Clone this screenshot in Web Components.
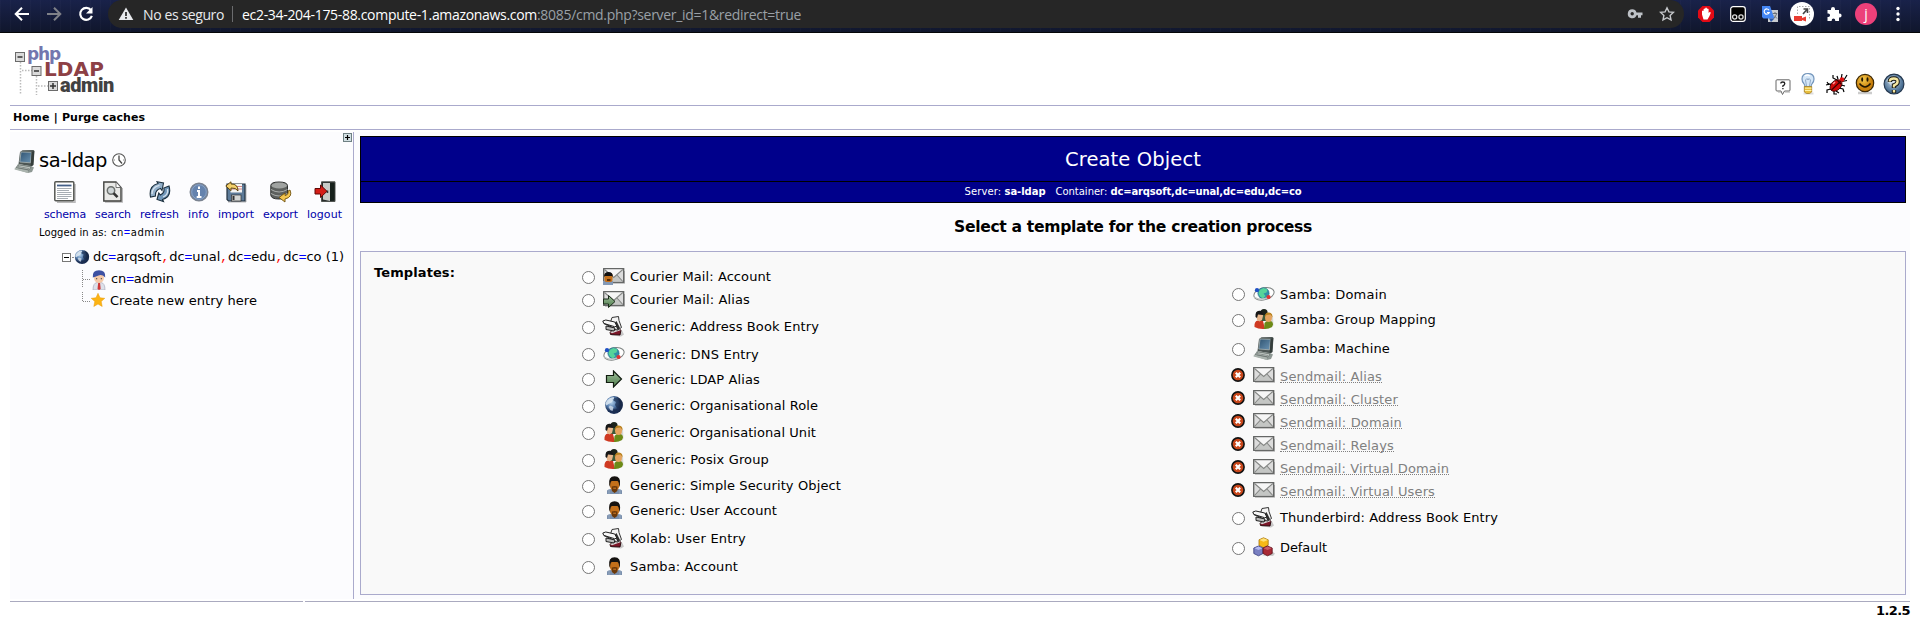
<!DOCTYPE html>
<html lang="es">
<head>
<meta charset="utf-8">
<title>phpLDAPadmin (1.2.5)</title>
<style>
html,body{height:621px}
body{margin:0;background:#fff;font:13px "DejaVu Sans",Verdana,sans-serif;color:#000;overflow:hidden}
</style>
</head>
<body>
<pla-app></pla-app>
<script>
class Base extends HTMLElement {
  connectedCallback() {
    if (this.shadowRoot) return;
    this.attachShadow({ mode: 'open' }).innerHTML = this.render();
  }
}

/* Icon set: [width, height, markup] */
const mail = (x = 0) => `<rect x="${x + .7}" y=".7" width="20" height="13.6" fill="#dcdcdc" stroke="#5f6160" stroke-width="1.3"/><path d="M${x + 1.5} 13.5 L${x + 7} 7.2 H${x + 14} L${x + 19.6} 13.5Z" fill="#c4c6c4"/><path d="M${x + 1.5} 1.5 L${x + 10.7} 9.5 L${x + 19.8} 1.5Z" fill="#f6f6f6"/><path d="M${x + 1.5} 1.5 L${x + 10.7} 9.5 L${x + 19.8} 1.5 M${x + 1.5} 13.5 L${x + 7.5} 7 M${x + 19.8} 13.5 L${x + 14} 7" stroke="#858785" fill="none" stroke-width="1.1"/><path d="M${x + 2} 15.5H${x + 21.5}V3" stroke="#0003" fill="none"/>`;
const man = `<path d="M1 18v-3.500q1-1.500 4-1.500h7q3 0 4 1.500V18z" fill="#7b90ad"/><path d="M3 14v4M14 14v4" stroke="#96a9c2"/><ellipse cx="8.600" cy="8" rx="5" ry="7" fill="#c4701a"/><path d="M3.300 9Q2 .3 8.600.3 15.200.3 13.900 9l-.8 2q.2-5-1.600-6H5.700Q4 6 4.100 11z" fill="#151210"/><path d="M5.700 10.500q3-1 5.800 0l-.2 4.500-2.700 2-2.700-2z" fill="#6b390a"/><path d="M7.200 11.700h2.800v1H7.200z" fill="#d57d26"/>`;
const globe = `<circle cx="10" cy="10" r="8.900" fill="url(#gl)"/><path d="M3.500 5q2-2.500 6-3l1 1.500-2 1 .5 1.500-2.500 2L4.500 9 2.500 10.500 1.500 9Q2 6.500 3.500 5z" fill="#dfeaf3" opacity=".85"/><path d="M6 10.500l3.500 1.500-1 4q-3-1-4-4z" fill="#dbe6f1" opacity=".75"/><path d="M10 3q5-.5 7 4l-1 5-3 1-2-3 1-3-2.500-1.500zM9.500 14l4 1-2 3-2.500-.5z" fill="#1b2e4f" opacity=".7"/><path d="M13 1.700q6 3 5.900 8.300-.5 5-5.900 8.300 6-8.300 0-16.600z" fill="#15233e" opacity=".5"/>`;
const defs = `<defs><radialGradient id="gl" cx=".35" cy=".35"><stop offset="0" stop-color="#b7d5ee"/><stop offset=".6" stop-color="#537aab"/><stop offset="1" stop-color="#1b2f55"/></radialGradient><linearGradient id="scr" x2="1" y2="1"><stop offset="0" stop-color="#2f5371"/><stop offset="1" stop-color="#6a93b3"/></linearGradient><linearGradient id="gr" x2="0" y2="1"><stop offset="0" stop-color="#9fc09c"/><stop offset="1" stop-color="#4e7c4b"/></linearGradient><radialGradient id="sm" cx=".4" cy=".3"><stop offset="0" stop-color="#f6cb4c"/><stop offset="1" stop-color="#c9800c"/></radialGradient><radialGradient id="hp" cx=".45" cy=".4"><stop offset="0" stop-color="#c3d6e6"/><stop offset="1" stop-color="#4a6f93"/></radialGradient></defs>`;
const ICONS = {
  back: [16, 16, `<path d="M15 8H2M8 1.700L1.700 8 8 14.300" stroke="#fff" stroke-width="2" fill="none"/>`],
  fwd: [16, 16, `<path d="M1 8H14M8 1.700L14.300 8 8 14.300" stroke="#7f8188" stroke-width="2" fill="none"/>`],
  reload: [16, 16, `<path d="M13 4.200A6 6 0 1 0 13.900 9.800" stroke="#fff" stroke-width="2.100" fill="none"/><path d="M14.500 1v6.500H8z" fill="#fff"/>`],
  warn: [16, 14, `<path d="M8 .5L15.300 13H.7z" fill="#e8eaed"/><path d="M8 5v4M8 10v1.700" stroke="#262626" stroke-width="1.700"/>`],
  key: [16, 12, `<path d="M5.300 1.300a4.500 4.500 0 1 0 4.200 6H11v2.500h3V7.300h1.500v-2.800H9.500a4.500 4.500 0 0 0-4.200-3.200z" fill="#bdc1c6"/><circle cx="5.200" cy="5.800" r="1.700" fill="#262626"/>`],
  star: [16, 16, `<path d="M8 1.800l1.900 4.100 4.500.5-3.300 3.100.9 4.400L8 11.700l-4 2.200.9-4.400L1.600 6.400l4.500-.5z" fill="none" stroke="#c6c8cb" stroke-width="1.400"/>`],
  abp: [18, 18, `<path d="M5.500 1h7L17 5.500v7L12.500 17h-7L1 12.500v-7z" fill="#e20a15"/><path d="M5 9.500V6q1-1 1.600 0V4q.9-1 1.600 0V3q.9-1 1.700 0v1q1-1 1.700.2V8q1.400-1.700 2.200-.3L12.500 11l-2 3.500h-4z" fill="#fff"/>`],
  monkey: [18, 18, `<rect x="1.700" y="1.700" width="14.600" height="14.600" rx="2.500" fill="#000" stroke="#fff" stroke-width="1.200"/><circle cx="5.700" cy="12" r="2.100" fill="none" stroke="#ddd" stroke-width="1.300"/><circle cx="12" cy="12" r="2.100" fill="none" stroke="#ddd" stroke-width="1.300"/>`],
  trans: [18, 18, `<rect x="7" y="5" width="10" height="12" fill="#c9ccd0"/><path d="M1 1h8l4.500 12.500H2.500L1 12z" fill="#4486f4"/><path d="M8 13.500h5.500L10 17z" fill="#2b57a8"/><path d="M8 5.200A2.600 2.600 0 1 0 8.200 7.500H6" stroke="#fff" stroke-width="1.200" fill="none"/><path d="M11.700 8.500h4.500M14 7v1.500M15.500 9q-1 3-3 4.500M13 10.500l3 3" stroke="#6b7178" fill="none"/>`],
  rec: [24, 24, `<circle cx="12" cy="12" r="12" fill="#fff"/><path d="M7.500 12V4.500H19.500V17" stroke="#aaa" stroke-dasharray="1.500 1.500" fill="none"/><path d="M13 12l4-4.500M13.500 7h4v4" stroke="#444" stroke-width="1.600" fill="none"/><path d="M4 14h8v2l4-1.500v5L12 18v1H4z" fill="#e93c31"/>`],
  puzzle: [16, 16, `<path d="M1.500 4H5V3a2 2 0 0 1 4 0v1h4v3.500h.6a2 2 0 0 1 0 4H13V15H9.200v-.8a1.700 1.700 0 0 0-3.500 0v.8H1.500v-4h.8a1.700 1.700 0 0 0 0-3.500h-.8z" fill="#fff"/>`],
  dots: [6, 16, `<circle cx="3" cy="2.500" r="1.700" fill="#fff"/><circle cx="3" cy="8" r="1.700" fill="#fff"/><circle cx="3" cy="13.500" r="1.700" fill="#fff"/>`],
  bubble: [16, 17, `<path d="M2 .8h12q1 0 1 1V11q0 1-1 1H9.500L7.500 15.500 6 12H2q-1 0-1-1V1.800q0-1 1-1z" fill="#fff" stroke="#666"/><path d="M3 13h3M10 13h5" stroke="#aaa"/><path d="M5.800 4.500q0-1.500 2-1.500t2 1.500-1.900 2.300v1.300M7.900 9v1.300" stroke="#222" stroke-width="1.300" fill="none"/>`],
  bulb: [16, 22, `<path d="M3.500 20.500h10" stroke="#0002" stroke-width="2"/><path d="M8 .7Q14 .7 14 6q0 2.500-1.800 4.500Q11 12 11 14H5q0-2-1.200-3.500Q2 8.500 2 6 2 .7 8 .7z" fill="#d5e7f8" stroke="#7395bb" stroke-width="1.200"/><path d="M6.500 13l-1-6 1.500-1.500L8 7l1-1.500L10.500 7l-1 6" stroke="#7d99ba" fill="none" stroke-width=".8"/><path d="M4.700 3q3-2 5 0" stroke="#fff" stroke-width="1.500" fill="none"/><path d="M4.300 13.500h7.400v5.500L9.500 20.500h-3L4.300 19z" fill="#e8bd3d" stroke="#9b7518" stroke-width=".7"/><path d="M5 15.200h6.500M5 17.500h6.500" stroke="#fff3a5"/>`],
  bug: [23, 22, `<path d="M16 7l1-6M19 7l3-5M17 8.500l5-1M4 12L2 9M1 12l4-1 2 2M6 16l-4 1v3M9 18v3h3M11 18l3 2M14 15l4 1 1 3M16 12l4 1M12 7L8 5V2M13 6l-1-3" stroke="#000" stroke-width="1.200" fill="none"/><ellipse cx="11" cy="12.500" rx="6.800" ry="4.800" transform="rotate(-42 11 12.500)" fill="#d10909" stroke="#2a0000" stroke-width=".8"/><circle cx="17" cy="6.500" r="2.300" fill="#e01010"/><path d="M16 8L6.500 17M12 7l4 4" stroke="#400" stroke-width="1.200"/><path d="M8 11l2-2" stroke="#ff9b9b" stroke-width="1.500"/>`],
  smile: [20, 22, `<path d="M3 20h14" stroke="#0003" stroke-width="2.500"/><circle cx="10" cy="10" r="8.700" fill="url(#sm)" stroke="#3b2806" stroke-width="1.200"/><ellipse cx="7.200" cy="6.500" rx="1" ry="2.200" fill="#201500"/><ellipse cx="12.500" cy="6.500" rx="1" ry="2.200" fill="#201500"/><path d="M4.500 10.500q5.500 7 11 0" stroke="#201500" stroke-width="1.300" fill="none"/>`],
  help: [22, 22, `<circle cx="11" cy="11" r="9.900" fill="url(#hp)" stroke="#25384f" stroke-width="1.200"/><path d="M3 8q5-8 15-2-6 1-8 8z" fill="#fff" opacity=".45"/><path d="M6.800 9q0-3.500 4-3.500t3.800 3.300q0 2.500-3.600 3.500v2.700M11 17v3" stroke="#161611" stroke-width="4.400" fill="none"/><path d="M6.800 8.600q0-3.100 4-3.100t3.800 3.100q0 2.700-3.600 3.700v2.300M11 17v2.600" stroke="#f6e8a2" stroke-width="2.400" fill="none"/>`],
  expand: [9, 9, `<rect x=".5" y=".5" width="8" height="8" fill="#d3e0e3" stroke="#6f8083"/><path d="M4.500 2v5M2 4.500h5" stroke="#000" stroke-width="1.200"/>`],
  machine: [22, 25, `<path d="M6 3L8.500 1.200 19.500 1l1 1-1 14-2 1.500L4.500 15z" fill="#4d5654"/><path d="M7 3l10.500.3-1 10.500L5.800 13z" fill="url(#scr)" stroke="#a9b5b5" stroke-width=".8"/><path d="M17.500 3l2.700-1-1 14-2.500 1.200z" fill="#343d3b"/><path d="M4 15l13 2 3 1.500L18 23l-4 1L1 20z" fill="#8e9894"/><path d="M5 16l12 2-2 3L2 18.500z" fill="#c9d0cc" stroke="#5b6461" stroke-width=".6"/><path d="M1 18.500l13 3V24L.5 20.500z" fill="#aab3ae"/><path d="M4 17.500l11 2M3.500 18.800l11 2" stroke="#6a7370" stroke-width=".7"/>`],
  clock: [14, 14, `<circle cx="7" cy="7" r="6.300" fill="#fff" stroke="#555" stroke-width="1.100"/><path d="M7 2.500V7l3 3.500" stroke="#444" stroke-width="1.300" fill="none"/><path d="M2 7h1M11 7h1" stroke="#888"/>`],
  schema: [22, 22, `<path d="M3 21.200h18V3" stroke="#0004" stroke-width="1.500" fill="none"/><rect x=".8" y=".8" width="19" height="19" rx="1" fill="#fff" stroke="#555753" stroke-width="1.500"/><path d="M3 4.500h14.500" stroke="#435f88" stroke-width="1.800"/><path d="M3 7.500h14.500M3 9.500h12M3 11.500h14.500M3 13.500h14.500M3 15.500h14.500M3 17.500h11" stroke="#a7adb3" stroke-width="1"/>`],
  search: [20, 22, `<path d="M2 21h17.500V7" stroke="#0004" fill="none" stroke-width="1.500"/><path d="M.8 1H13l5 5.500V20H.8z" fill="#e9e9e7" stroke="#41423f" stroke-width="1.400"/><path d="M13 1v5.500h5z" fill="#fff" stroke="#555" stroke-width=".8"/><circle cx="8" cy="9.500" r="3.700" fill="#cfd5d7" stroke="#6c706d" stroke-width="1.500"/><path d="M10.500 12.200l4 4" stroke="#333" stroke-width="2.600"/>`],
  refresh: [22, 22, `<path d="M1.500 16Q-.5 5 9 2.500L8 .8 14.500 2 13 9.500l-1.500-2Q6 9 6.500 15z" fill="#93b0ca" stroke="#1c303f" stroke-width="1.100"/><path d="M20 5Q23 15.500 13.500 18.500l1 2L8 18.500l1.800-6.500 1.500 2Q16 12 14.800 7z" fill="#7297b9" stroke="#1c303f" stroke-width="1.100"/><path d="M3 13q0-7 7.500-8.700M18.500 8q1 6-4.500 8" stroke="#d6e3ee" fill="none" stroke-width="1.300"/>`],
  info: [20, 20, `<circle cx="10" cy="10" r="8.800" fill="#6583ae" stroke="#7b8390" stroke-width="1.400"/><circle cx="10" cy="10" r="7.300" fill="none" stroke="#93a9c8" stroke-width=".8"/><path d="M10 4.500v2.400M8 9h2v5.500M7.700 15h4.800" stroke="#fff" stroke-width="2" fill="none"/>`],
  import: [22, 22, `<path d="M3 21h18V4" stroke="#0004" fill="none"/><path d="M2 3h18v17H3.500L2 18.500z" fill="#5d7b99" stroke="#22313f" stroke-width="1.200"/><rect x="5.500" y="3" width="11.500" height="8.500" fill="#f5f5f3"/><path d="M6 5.500h11M6 8h11" stroke="#c66" stroke-width=".8"/><rect x="6.500" y="14" width="9.500" height="6" fill="#d4d6d4" stroke="#333" stroke-width=".7"/><path d="M8.500 15v4" stroke="#333" stroke-width="2"/><path d="M.8 5L6 .8V3q7-.3 7 7-2-3.500-7-3v2.700z" fill="#f3d06b" stroke="#604610" stroke-width="1"/>`],
  export: [22, 22, `<path d="M.8 4.500Q1 1 9 1t8.500 3.500V14Q17 18 9 18T.8 14z" fill="#5d605e" stroke="#2d2f2e"/><ellipse cx="9.200" cy="4.500" rx="7.800" ry="3" fill="#a0a3a1"/><path d="M1 8.500q8 5 16.500 0M1 12.500q8 5 16.500 0" stroke="#a9acaa" fill="none" stroke-width="1"/><path d="M20 9q3 7-5 9v3l-6-4.500 6-4.500v2.500q4-1 3-4.500z" fill="#f2c54f" stroke="#70510f" stroke-width=".9"/>`],
  logout: [22, 22, `<path d="M7.500.8H21V20.500H7.500z" fill="#272b2a" stroke="#505450"/><path d="M9 2h7v18L9 18.500z" fill="#c8cbc7"/><path d="M16 2v18l4.500-1V2z" fill="#16201b"/><path d="M13.500 9.500v2.500" stroke="#333" stroke-width="1.500"/><path d="M1 7.500h5.500V4l6.500 6.300-6.500 6.200v-3.500H1z" fill="#d41d17" stroke="#5f0806"/>`],
  minus: [12, 9, `<rect x=".5" y=".5" width="8" height="8" fill="#fff" stroke="#777"/><path d="M2 4.500h5" stroke="#000"/><path d="M10 4.500h2" stroke="#888"/>`],
  branch: [9, 22, `<path d="M.5 2v17" stroke="#888" stroke-dasharray="1 1"/><path d="M1 11.500h8" stroke="#888" stroke-dasharray="1 1"/>`],
  branchend: [9, 22, `<path d="M.5 2v10" stroke="#888" stroke-dasharray="1 1"/><path d="M1 11.500h8" stroke="#888" stroke-dasharray="1 1"/>`],
  globe: [20, 20, globe],
  minglobe: [16, 16, `<g transform="scale(.8)">${globe}</g>`],
  person: [14, 20, `<path d="M1 20q0-7 4-7.500h4q4 .5 4 7.500z" fill="#dde1ea" stroke="#aab" stroke-width=".7"/><path d="M6.200 12.500h1.800L8.700 19 7 20l-1.500-1z" fill="#cf3838"/><ellipse cx="7" cy="7.700" rx="5" ry="5.300" fill="#f5c9a8"/><path d="M.8 7.500Q0 .3 7 .3T13.200 7.500Q10 4 6.500 5.500 3 7 .8 7.500z" fill="#3d51a3"/><path d="M4.700 8v1.300M9.300 8v1.300" stroke="#444"/>`],
  staro: [14, 14, `<path d="M7 .3l2 4.500 4.800.5L10.200 8.500l1 5L7 11l-4.200 2.500 1-5L.2 5.300 5 4.800z" fill="#fcb414" stroke="#e99a0c" stroke-width=".5"/>`],
  mail: [22, 17, mail()],
  mailuser: [22, 17, `${mail()}<rect y="13" width="10" height="4" fill="#8298b5"/><rect x="1.500" y="5" width="8" height="9" rx="2" fill="#c4701a"/><path d="M1 9Q1 4 5.500 4T9.800 9L9 8H2z" fill="#111"/><path d="M4 11h3.500v2H4z" fill="#5b3009"/>`],
  mailarrow: [22, 17, `${mail()}<path d="M.5 8h5V4.500L12 10.500 5.500 16.500V13h-5z" fill="url(#gr)" stroke="#1d2c1c" stroke-width="1"/>`],
  book: [23, 21, `<path d="M9 19.500l10 1 3-2-2-4z" fill="#0003"/><path d="M8 16l9-3 2 1-1 5-9.500-.5z" fill="#7b1628" stroke="#270509" stroke-width=".9"/><path d="M8 16l9-3 2 1-9 3.200z" fill="#d7d7d7"/><path d="M10 1.500l6.500-1 .5 4 2.500 7-4 2.500-9-2z" fill="#f4f4f4" stroke="#333" stroke-width="1"/><path d="M14.500 5l3.500 7-2.500 2-3-7z" fill="#2d2d2d"/><path d="M.8 5l3-1 9 2 2 4-4 1.500-9-4z" fill="#f7f7f7" stroke="#222" stroke-width="1"/><path d="M2 7.500l10 3M4 10l9 2-1 3-8-1.500z" fill="#bbb" stroke="#222" stroke-width="1"/>`],
  dns: [22, 18, `<ellipse cx="11" cy="8.800" rx="10.300" ry="6" transform="rotate(-14 11 8.800)" fill="#fff" stroke="#7d8280" stroke-width="1"/><circle cx="10.500" cy="8.300" r="5.600" fill="#318fa8" stroke="#1c6a80" stroke-width=".6"/><path d="M6.500 5l4-2 4 1.500-1 3-3 1 2 2.500-2.500 2.500-3-2-1.500-3z" fill="#56d49a"/><path d="M1.200 12q7 4.500 15-.5" stroke="#c5c9c7" fill="none" stroke-width="1.100"/><circle cx="4" cy="5.200" r="2.100" fill="#1e4fc4"/><circle cx="15.500" cy="12" r="2.100" fill="#de3535"/>`],
  arrow: [18, 18, `<path d="M1.500 5.500h7V1L16.500 9 8.500 17v-4.500h-7z" fill="url(#gr)" stroke="#111c10" stroke-width="1.200"/>`],
  group: [20, 21, `<path d="M10 19.500q7 .5 9.500-3L19 7z" fill="#0002"/><circle cx="10" cy="3.700" r="3.600" fill="#1c231a"/><path d="M6 6h8v6H6z" fill="#3d5a39"/><path d="M.5 18Q0 12 4 11.500l5 .5 2 8q-6.500.5-10.500-2z" fill="#cf3a22"/><path d="M10 20l.5-6q1-2 4-2.500 4.500.5 4.500 4L18 18q-4 2.500-8 2z" fill="#6d8a17"/><path d="M2.500 7Q2 2.500 5.500 2.500T9 7l-1 4-2.500 1.500L3 11z" fill="#e9b78c"/><path d="M1.500 8Q1 1.500 5.500 1.800 9.500 2 9 6L4 5.500 3 9z" fill="#171717"/><ellipse cx="14.500" cy="8.500" rx="3.500" ry="4.500" fill="#e5a35d"/><path d="M10.800 8Q11 3 15 3.500q4 .5 3.500 5l-2-3-4 .5z" fill="#b8821e"/>`],
  man: [17, 18, man],
  no: [14, 14, `<circle cx="7" cy="7" r="6.100" fill="#c9471b" stroke="#111" stroke-width="1.600"/><path d="M4.800 4.800l4.400 4.400M9.200 4.800l-4.400 4.400" stroke="#fff" stroke-width="2.200"/>`],
  cubes: [22, 20, `<path d="M9 18.500l11 .5 2-2.500-3-2z" fill="#0003"/><path d="M10.500.8l4.700 2v5.500l-4.700 2.500-4.500-2.500V2.800z" fill="#f7b917" stroke="#a4720b" stroke-width=".8"/><path d="M6.500 3l4 1.800 4.500-1.800-4.500-1.700z" fill="#ffe279"/><path d="M5.500 9L10 11v5.500l-4.500 2.300L.8 16.500V11z" fill="#7a80c2" stroke="#32387c" stroke-width=".8"/><path d="M1.500 11.200l4 1.800L9.500 11.200 5.500 9.500z" fill="#b5baf0"/><path d="M14.500 9l4.700 2v5.500l-4.700 2.300L10 16.500V11z" fill="#a92a36" stroke="#5b0d16" stroke-width=".8"/><path d="M10.500 11.200l4 1.800 4.200-1.800-4.200-1.700z" fill="#c95d66"/>`],
  tree: [54, 47, `<g fill="none" stroke="#bbb" stroke-width="1.500" stroke-dasharray="1.500 1.500"><path d="M5.500 14v33M21.500 28v19M7 22.500h10M23 38h10"/></g><g fill="#dadada" stroke="#6b6b6b"><rect x=".5" y="4.500" width="9" height="9"/><rect x="17" y="18.500" width="9" height="9"/><rect x="33.500" y="33.500" width="9" height="9"/></g><path d="M2.500 9h5M19 23h5M35 38h6M38 35v6" stroke="#333" stroke-width="1.500"/>`]
};

class PlaIcon extends Base {
  render() {
    const [w, h, body] = ICONS[this.getAttribute('name')];
    return `<style>:host{display:block;flex:none;width:${w}px;height:${h}px}svg{display:block}</style><svg width="${w}" height="${h}" viewBox="0 0 ${w} ${h}">${/url\(#/.test(body) ? defs : ''}${body}</svg>`;
  }
}
customElements.define('pla-icon', PlaIcon);

/* Text run tracked so that it takes exactly the width given in w. */
class FitText extends Base {
  render() {
    return `<style>:host{display:inline-block;white-space:pre;flex:none}</style><span><slot></slot></span>`;
  }
  connectedCallback() {
    super.connectedCallback();
    const w = +this.getAttribute('w'), s = this.shadowRoot.querySelector('span');
    const now = s.getBoundingClientRect().width, n = this.textContent.length;
    if (w && now) { s.style.letterSpacing = ((w - now) / n).toFixed(3) + 'px'; this.style.width = w + 'px'; }
  }
}
customElements.define('fit-text', FitText);

class BrowserBar extends Base {
  render() {
    return `<style>
:host{display:flex;align-items:flex-start;height:32px;border-bottom:1px solid #050608;background:repeating-linear-gradient(90deg,#ffffff05 0 1px,transparent 1px 10px),linear-gradient(#19224a,#10162c);font:14px "Open Sans","Noto Sans",sans-serif;color:#e8eaed}
.nav{display:flex;gap:16px;padding:6px 0 0 14px;width:94px}
.url{display:flex;align-items:center;box-sizing:border-box;width:1576px;height:28px;background:#262626;border-radius:14px;padding:0 9px 0 10px}
.sep{width:1px;height:16px;background:#6b6c6e;margin:0 9px 0 8px}
.rest{color:#9aa0a6}.sp{flex:1}
.ext{display:flex;align-items:center;height:28px;padding-left:13px}
.av{width:22px;height:22px;border-radius:50%;background:#ec407a;display:grid;place-items:center;font-size:14px;line-height:20px;color:#fff}
</style>
<div class="nav"><pla-icon name="back"></pla-icon><pla-icon name="fwd"></pla-icon><pla-icon name="reload"></pla-icon></div>
<div class="url"><pla-icon name="warn" style="margin-right:9px"></pla-icon><fit-text w="81">No es seguro</fit-text><span class="sep"></span><fit-text w="295" style="color:#fff">ec2-34-204-175-88.compute-1.amazonaws.com</fit-text><fit-text class="rest" w="264">:8085/cmd.php?server_id=1&amp;redirect=true</fit-text><span class="sp"></span><pla-icon name="key" style="margin-right:16px"></pla-icon><pla-icon name="star"></pla-icon></div>
<div class="ext"><pla-icon name="abp"></pla-icon><pla-icon name="monkey" style="margin-left:14px"></pla-icon><pla-icon name="trans" style="margin-left:14px"></pla-icon><pla-icon name="rec" style="margin-left:11px"></pla-icon><pla-icon name="puzzle" style="margin-left:12px"></pla-icon><span class="av" style="margin-left:13px">j</span><pla-icon name="dots" style="margin-left:18px"></pla-icon></div>`;
  }
}
customElements.define('browser-bar', BrowserBar);

class PlaLogo extends Base {
  render() {
    return `<style>
:host{display:grid;width:100px;height:48px;font-family:"DejaVu Sans",sans-serif;font-weight:bold}
:host>*,pla-icon,.w{grid-area:1/1}
.w{display:flex;flex-direction:column}
fit-text{line-height:15px;height:15px}
</style><pla-icon name="tree"></pla-icon><div class="w"><fit-text w="33" style="margin:-1px 0 0 12px;color:#7376ae;font-size:17px">php</fit-text><fit-text w="60" style="margin:0 0 0 29px;color:#8d4045;font-size:20px">LDAP</fit-text><fit-text w="54" style="margin:1px 0 0 45px;color:#414141;font:900 20px/15px Roboto,sans-serif">admin</fit-text></div>`;
  }
}
customElements.define('pla-logo', PlaLogo);

class PlaHeader extends Base {
  render() {
    return `<style>
:host{display:block;margin:0 10px}
.top{display:flex;justify-content:space-between;height:72px;border-bottom:1px solid #aaaacc}
.ic{display:flex;align-items:flex-start;padding-top:40px;padding-right:5px}
.menu{display:flex;height:23px;line-height:24px;border-bottom:1px solid #aaaacc;font-size:11px;font-weight:bold;padding-left:3px}
</style>
<div class="top"><pla-logo style="margin:15px 0 0 5px"></pla-logo><div class="ic"><pla-icon name="bubble" style="margin-top:6px"></pla-icon><pla-icon name="bulb" style="margin-left:9px"></pla-icon><pla-icon name="bug" style="margin-left:9px"></pla-icon><pla-icon name="smile" style="margin-left:7px"></pla-icon><pla-icon name="help" style="margin-left:8px"></pla-icon></div></div>
<div class="menu"><fit-text w="49">Home | </fit-text><fit-text w="83">Purge caches</fit-text></div>`;
  }
}
customElements.define('pla-header', PlaHeader);

class ToolLink extends Base {
  render() {
    return `<style>:host{display:flex;flex-direction:column;align-items:center;font-size:11px;line-height:14px;color:#0000aa}
div{height:27px;display:flex;align-items:center;margin-bottom:3px}</style><div><pla-icon name="${this.getAttribute('icon')}"></pla-icon></div><slot></slot>`;
  }
}
customElements.define('tool-link', ToolLink);

class LdapTree extends Base {
  render() {
    const c = '<i class="c">,</i>', e = '<i class="e">=</i>';
    return `<style>
:host{display:block;box-sizing:border-box;width:344px;height:467px;background:#fcfcfe;border-right:1px solid #aaaacc}
.ex{display:flex;justify-content:flex-end;box-sizing:border-box;padding:1px 1px 0 0;height:15px}
.srv{display:flex;align-items:center;height:28px;margin-left:4px;font-size:19.500px}
.tools{display:flex;margin:3px 0 0 34px}
.log{display:flex;margin:3px 0 0 29px;font-size:10px;line-height:16px;height:16px}
.n{display:flex;align-items:center;height:22px;line-height:22px}
.n fit-text{height:22px}
i{font:normal 13px "Liberation Mono",monospace;line-height:1}
.log i{font-size:10px;line-height:1}
.e{color:#0000ff;-webkit-text-stroke:.3px #0000ff}.c{color:#ff0000}
</style>
<div class="ex"><pla-icon name="expand"></pla-icon></div>
<div class="srv"><pla-icon name="machine"></pla-icon><fit-text w="68" style="margin:-2px 0 0 3px">sa-ldap</fit-text><pla-icon name="clock" style="margin:-2px 0 0 5px"></pla-icon></div>
<div class="tools">
<tool-link icon="schema"><fit-text w="42">schema</fit-text></tool-link>
<tool-link icon="search" style="margin-left:9px"><fit-text w="36">search</fit-text></tool-link>
<tool-link icon="refresh" style="margin-left:9px"><fit-text w="39">refresh</fit-text></tool-link>
<tool-link icon="info" style="margin-left:9px"><fit-text w="21">info</fit-text></tool-link>
<tool-link icon="import" style="margin-left:9px"><fit-text w="36">import</fit-text></tool-link>
<tool-link icon="export" style="margin-left:9px"><fit-text w="35">export</fit-text></tool-link>
<tool-link icon="logout" style="margin-left:9px"><fit-text w="35">logout</fit-text></tool-link></div>
<div class="log"><fit-text w="68">Logged in as:</fit-text><fit-text w="54" style="margin-left:4px">cn${e}admin</fit-text></div>
<div class="n" style="margin:5px 0 0 52px"><pla-icon name="minus" style="margin-top:1px"></pla-icon><pla-icon name="minglobe" style="margin:0 3px 0 0"></pla-icon><fit-text w="251">dc${e}arqsoft${c}dc${e}unal${c}dc${e}edu${c}dc${e}co (1)</fit-text></div>
<div class="n" style="margin-left:72px"><pla-icon name="branch"></pla-icon><pla-icon name="person" style="margin:2px 5px 0 1px"></pla-icon><fit-text w="63" style="margin-top:-1px">cn${e}admin</fit-text></div>
<div class="n" style="margin-left:72px"><pla-icon name="branchend"></pla-icon><pla-icon name="staro" style="margin:-2px 5px 0 0"></pla-icon><fit-text w="147" style="margin-top:-1px">Create new entry here</fit-text></div>`;
  }
}
customElements.define('ldap-tree', LdapTree);

/* One template choice; r and i are the offsets of its marker and icon from the row's top. */
class TemplateRow extends Base {
  render() {
    const a = n => this.getAttribute(n), off = this.hasAttribute('off');
    const mark = off ? '<pla-icon class="m x" name="no"></pla-icon>' : '<span class="m o"></span>';
    return `<style>:host{display:flex;align-items:flex-start;height:${a('h')}px}
.m{margin-top:${a('r')}px}.o{box-sizing:border-box;width:13px;height:13px;border:1px solid #767676;border-radius:50%;background:#fff;margin-right:8px}
.x{margin-left:-1px;margin-right:8px}
.i{width:27px}.i pla-icon{margin:${a('i')}px auto 0 ${a('dx')}px}
fit-text{margin-top:4px;line-height:20px}
.off{color:#808080;margin-top:7px;line-height:15px;height:13px;border-bottom:1px dotted #808080}</style>${mark}<span class="i"><pla-icon name="${a('icon')}"></pla-icon></span><fit-text w="${a('w')}" class="${off ? 'off' : ''}">${this.textContent}</fit-text>`;
  }
}
customElements.define('template-row', TemplateRow);

/* [baseline, marker centre, icon top, icon, icon dx, width, label, disabled] */
const LEFT = [
  [282, 277.5, 268, 'mailuser', 0, 141, 'Courier Mail: Account'], [305, 300.5, 291, 'mailarrow', 0, 120, 'Courier Mail: Alias'],
  [332, 327.5, 316, 'book', -1, 189, 'Generic: Address Book Entry'], [360, 354.5, 345, 'dns', 0, 129, 'Generic: DNS Entry'],
  [385, 379.5, 370, 'arrow', 2, 130, 'Generic: LDAP Alias'], [411, 406.5, 395, 'globe', 1, 188, 'Generic: Organisational Role'],
  [438, 433.5, 422, 'group', 1, 186, 'Generic: Organisational Unit'], [465, 460.5, 449, 'group', 1, 139, 'Generic: Posix Group'],
  [491, 486.5, 476, 'man', 3, 211, 'Generic: Simple Security Object'], [516, 511.5, 501, 'man', 3, 147, 'Generic: User Account'],
  [544, 539.5, 528, 'book', -1, 116, 'Kolab: User Entry'], [572, 567.5, 557, 'man', 3, 108, 'Samba: Account']];
const RIGHT = [
  [300, 294.5, 285, 'dns', 0, 107, 'Samba: Domain'], [325, 320.5, 309, 'group', 1, 156, 'Samba: Group Mapping'], [354, 349.5, 336, 'machine', 0, 110, 'Samba: Machine'],
  ...[['Alias', 102], ['Cluster', 118], ['Domain', 122], ['Relays', 114], ['Virtual Domain', 169], ['Virtual Users', 155]].map(([n, w], k) => [381 + 23 * k, 375.5 + 23 * k, 367 + 23 * k, 'mail', 0, w, 'Sendmail: ' + n, 1]),
  [523, 518.5, 507, 'book', -1, 218, 'Thunderbird: Address Book Entry'], [553, 548.5, 537, 'cubes', 0, 47, 'Default']];
const rows = list => list.map(([b, r, i, icon, dx, w, t, off], k) => {
  const h = k + 1 < list.length ? list[k + 1][0] - b : 24, top = b - 19;
  return `<template-row h="${h}" r="${r - (off ? 7.5 : 6.5) - top}" i="${i - top}" icon="${icon}" dx="${dx}" w="${w}"${off ? ' off' : ''}>${t}</template-row>`;
}).join('');

class CreatePanel extends Base {
  render() {
    return `<style>
:host{display:block;box-sizing:border-box;flex:1;background:#fcfcfe;padding:4px 4px 0 6px;height:467px}
.h{background:#00008b;color:#fff;border:1px solid #000;text-align:center}
.t{height:44px;line-height:46px;font-size:19.500px;border-bottom:1px solid #000}
.s{height:20px;line-height:20px;font-size:10px;display:flex;justify-content:center}
.q{text-align:center;font-weight:bold;font-size:15.600px;height:48px;line-height:49px}
.b{display:grid;grid-template-columns:208px 650px 1fr;box-sizing:border-box;height:344px;border:1px solid #aaaacc;background:#f9f9f9;padding-left:13px}
.l{font-weight:bold;padding-top:11px;line-height:20px}
</style>
<div class="h"><div class="t"><fit-text w="136">Create Object</fit-text></div><div class="s"><fit-text w="40">Server: </fit-text><b><fit-text w="41">sa-ldap</fit-text></b><fit-text w="55" style="margin-left:10px">Container: </fit-text><b><fit-text w="191">dc=arqsoft,dc=unal,dc=edu,dc=co</fit-text></b></div></div>
<div class="q"><fit-text w="358">Select a template for the creation process</fit-text></div>
<div class="b"><div class="l"><fit-text w="81">Templates:</fit-text></div><div style="padding-top:11px">${rows(LEFT)}</div><div style="padding-top:29px">${rows(RIGHT)}</div></div>`;
  }
}
customElements.define('create-panel', CreatePanel);

class PlaApp extends Base {
  render() {
    return `<style>:host{display:block;height:621px;overflow:hidden}
.main{display:flex;margin:2px 10px 0}
.foot{display:flex;gap:2px;margin:2px 10px 0}.foot i{height:1px;background:#aaaabf}
.v{display:flex;justify-content:flex-end;font-weight:bold;margin-right:10px;line-height:17px}
</style><browser-bar></browser-bar><pla-header></pla-header><div class="main"><ldap-tree></ldap-tree><create-panel></create-panel></div><div class="foot"><i style="width:293px"></i><i style="flex:1"></i></div><div class="v"><fit-text w="34">1.2.5</fit-text></div>`;
  }
}
customElements.define('pla-app', PlaApp);
</script>
</body>
</html>
